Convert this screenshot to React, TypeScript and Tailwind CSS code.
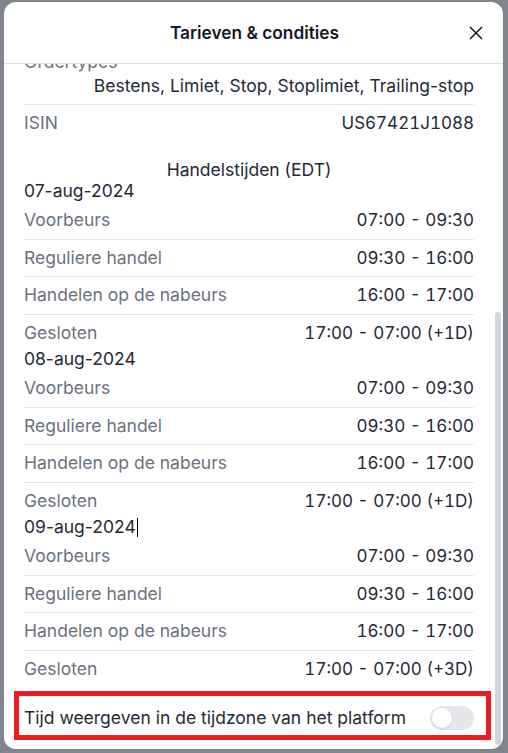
import { useLayoutEffect, useRef } from 'react'
import clsx from 'clsx'

const topRows = [
  ['Product', 'Aandeel'],
  ['Beurs', 'NASDAQ'],
  ['Valuta', 'USD'],
  ['Transactiekosten', '€ 1,00'],
  ['Valutakosten', '0,25%'],
  ['Minimale orderwaarde', '€ 1,00'],
  ['Fractioneel handelen', 'Ja'],
  ['Short gaan', 'Nee'],
  ['Hefboom', 'Nee'],
  ['Dividend', 'Ja'],
]

const sessions = [
  ['Voorbeurs', '07:00 - 09:30'],
  ['Reguliere handel', '09:30 - 16:00'],
  ['Handelen op de nabeurs', '16:00 - 17:00'],
]

const days = [
  { date: '07-aug-2024', closed: '17:00 - 07:00 (+1D)' },
  { date: '08-aug-2024', closed: '17:00 - 07:00 (+1D)' },
  { date: '09-aug-2024', closed: '17:00 - 07:00 (+3D)', caret: true },
]

function Row({ label, value, last }: { label: string; value: string; last?: boolean }) {
  return (
    <div
      className={clsx(
        'flex justify-between leading-6 pt-[6px]',
        last ? 'pb-[3.5px]' : 'pb-[6.5px] border-b border-[#e5e7eb]'
      )}
    >
      <span className="text-[#6b7280]">{label}</span>
      <span className="text-[#1f2937] text-[17px] tabular-nums">{value}</span>
    </div>
  )
}

export default function App() {
  const scrollRef = useRef<HTMLDivElement>(null)

  useLayoutEffect(() => {
    const el = scrollRef.current
    if (el) el.scrollTop = el.scrollHeight
  }, [])

  return (
    <div className="h-[753px] w-[508px] bg-[#7f848e] pt-[2px] pl-[4px] font-['Inter',sans-serif] text-[17.5px]">
      <div className="w-[499px] h-[747px] bg-white rounded-[12px] flex flex-col overflow-hidden">
        <div className="h-[62px] shrink-0 flex items-center justify-center relative border-b border-[#d9dce1]">
          <h2 className="text-[17.3px] font-semibold text-[#111827] ml-[2px]">Tarieven &amp; condities</h2>
          <button className="absolute right-[20px] top-[24px] w-[14px] h-[14px] text-[#111827]">
            <svg viewBox="0 0 14 14" width="14" height="14" fill="none" stroke="currentColor" strokeWidth="1.5">
              <path d="M1 1L13 13M13 1L1 13" />
            </svg>
          </button>
        </div>

        <div className="flex-1 min-h-0 relative">
          <div
            ref={scrollRef}
            className="h-full overflow-y-auto pl-5 pr-[29px] pt-[4px] pb-[9px] [scrollbar-width:none]"
          >
            {topRows.map(([l, v]) => (
              <Row key={l} label={l} value={v} />
            ))}

            <div className="flex flex-wrap leading-6 pt-[6px] pb-[5.5px] border-b border-[#e5e7eb]">
              <span className="text-[#6b7280]">Ordertypes</span>
              <span className="ml-auto text-right text-[#1f2937]">
                Bestens, Limiet, Stop, Stoplimiet, Trailing-stop
              </span>
            </div>
            <div className="flex justify-between leading-6 pt-[6px] pb-[6.5px]">
              <span className="text-[#6b7280]">ISIN</span>
              <span className="text-[#1f2937] text-[17px] tabular-nums">US67421J1088</span>
            </div>

            <div className="pt-[19px] leading-5 text-center text-[#1f2937]">Handelstijden (EDT)</div>

            {days.map((d) => (
              <div key={d.date}>
                <div className="leading-[22px] text-[#1f2937] flex items-center">
                  {d.date}
                  {d.caret && <span className="inline-block w-px h-[19px] bg-black ml-px" />}
                </div>
                {sessions.map(([l, v]) => (
                  <Row key={l} label={l} value={v} />
                ))}
                <Row label="Gesloten" value={d.closed} last />
              </div>
            ))}

            <div className="mt-[7px] ml-[-10px] mr-[-17px] h-[49px] border-[5px] border-[#ec1c24] flex items-center justify-between pl-[5px] pr-[12px] pt-[4px]">
              <span className="text-[#1f2937] leading-6">Tijd weergeven in de tijdzone van het platform</span>
              <div className="w-[44px] h-[24px] rounded-full bg-[#e5e7eb] flex items-center px-[2px]">
                <div className="w-[20px] h-[20px] rounded-full bg-white shadow-[0_1px_2px_rgba(0,0,0,0.12)]" />
              </div>
            </div>
          </div>
          {/* scrollbar thumb */}
          <div className="absolute right-[2px] top-[248px] w-[6px] h-[433px] rounded-full bg-[#d3d6dc]" />
        </div>
      </div>
    </div>
  )
}
